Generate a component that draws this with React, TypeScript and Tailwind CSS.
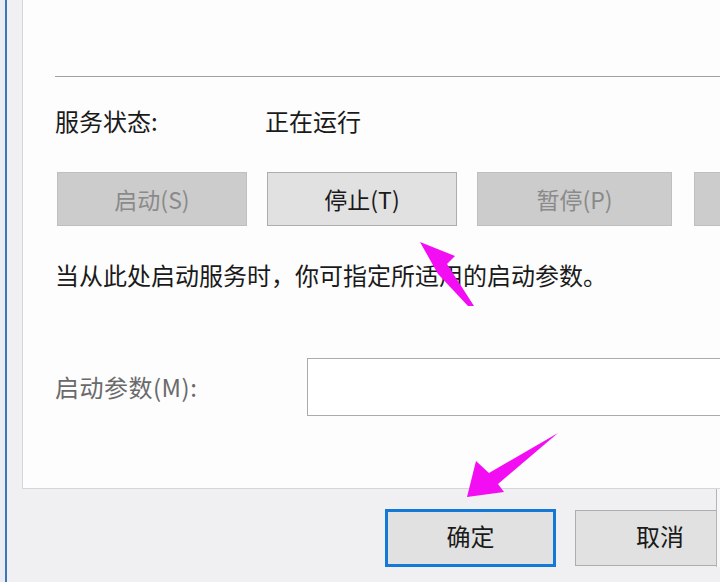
import React from "react";

const font = { fontFamily: '"Noto Sans CJK SC", "Noto Sans", sans-serif' };

function Btn({ label, w, kind }: { label: string; w: string; kind: "disabled" | "normal" }) {
  const cls =
    kind === "disabled"
      ? "bg-[#cccccc] border-[#bfbfbf] text-[#8a8a8a]"
      : "bg-[#e1e1e1] border-[#adadad] text-[#1a1a1a]";
  return (
    <div className={`${w} h-[54px] shrink-0 border flex items-center justify-center text-[23px] ${cls}`}>
      {label}
    </div>
  );
}

export default function App() {
  return (
    <div
      className="relative w-[720px] h-[582px] overflow-hidden flex bg-[#f0f0f2]"
      style={font}
    >
      <div className="w-[5px] shrink-0 bg-[#e9ecf3]" />
      <div className="w-[2px] shrink-0 bg-[#3b76bd]" />
      <div className="w-[15px] shrink-0 bg-[#f0f0f2]" />
      <div className="flex-1 min-w-0 flex flex-col">
        <div className="h-[489px] shrink-0 bg-[#fdfdfd] border-l border-b border-[#d6d6d8] pl-[32px] flex flex-col overflow-hidden">
          <div className="h-[76px] shrink-0" />
          <div className="h-px shrink-0 bg-[#a0a0a0] w-[700px]" />
          <div className="mt-[29px] h-[30px] leading-[30px] flex text-[24px] text-[#1a1a1a]">
            <div className="w-[210px] shrink-0">服务状态:</div>
            <div>正在运行</div>
          </div>
          <div className="mt-[36px] ml-[2px] flex">
            <Btn label="启动(S)" w="w-[190px]" kind="disabled" />
            <div className="w-[20px] shrink-0" />
            <Btn label="停止(T)" w="w-[190px]" kind="normal" />
            <div className="w-[20px] shrink-0" />
            <Btn label="暂停(P)" w="w-[195px]" kind="disabled" />
            <div className="w-[22px] shrink-0" />
            <Btn label="" w="w-[195px]" kind="disabled" />
          </div>
          <div className="mt-[34px] h-[30px] leading-[30px] text-[24px] text-[#1a1a1a] whitespace-nowrap">
            当从此处启动服务时，你可指定所适用的启动参数。
          </div>
          <div className="mt-[68px] flex items-center">
            <div className="w-[252px] shrink-0 text-[24px] tracking-[0.5px] text-[#6a6a6a] leading-[30px]">启动参数(M):</div>
            <div className="w-[500px] h-[58px] shrink-0 bg-white border border-[#ababab]" />
          </div>
        </div>
        <div className="mt-[20px] flex pl-[363px]">
          <div className="w-[171px] h-[58px] shrink-0 bg-[#e1e1e1] border-[3px] border-[#1479d6] flex items-center justify-center text-[24px] text-[#1a1a1a] pb-[4px]">
            确定
          </div>
          <div className="w-[19px] shrink-0" />
          <div className="w-[170px] h-[56px] mt-[1px] shrink-0 bg-[#e1e1e1] border border-[#adadad] flex items-center justify-center text-[24px] text-[#1a1a1a] pb-[4px]">
            取消
          </div>
        </div>
      </div>
      <div className="absolute left-[716px] top-[489px] w-[4px] h-[78px] bg-[#f7f7f8] border-l border-[#b5b5b5]" />
      <svg
        className="absolute left-0 top-0 pointer-events-none"
        width="720"
        height="582"
        viewBox="0 0 720 582"
      >
        <polygon
          points="420,242 455,256 447,264 474,306 468,306 438,274"
          fill="#f20df2"
        />
        <polygon
          points="467,497 476,461 489,473 558,433 498,484 504,492"
          fill="#f20df2"
        />
      </svg>
    </div>
  );
}
